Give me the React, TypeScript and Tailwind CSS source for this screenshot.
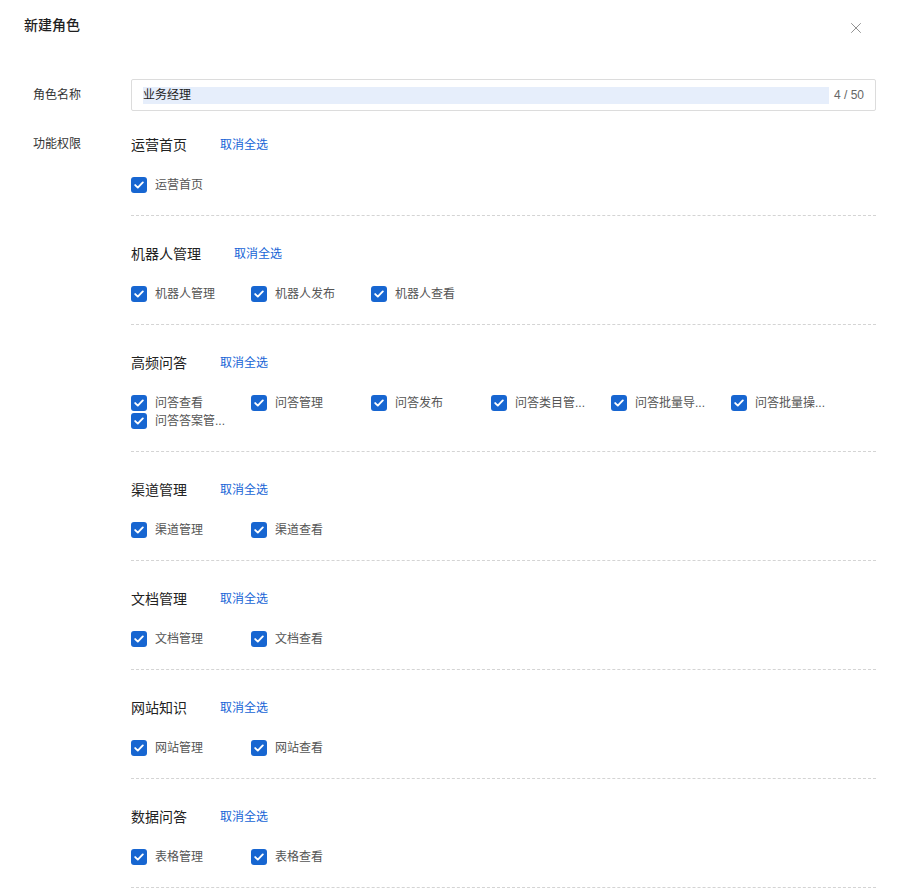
import { X } from "lucide-react";

type Item = { name: string; shown?: string };
type Section = { title: string; items: Item[] };

// 长名称在参考图中被截断显示，完整名称放在 title 里
const sections: Section[] = [
	{ title: "运营首页", items: [{ name: "运营首页" }] },
	{
		title: "机器人管理",
		items: [{ name: "机器人管理" }, { name: "机器人发布" }, { name: "机器人查看" }],
	},
	{
		title: "高频问答",
		items: [
			{ name: "问答查看" },
			{ name: "问答管理" },
			{ name: "问答发布" },
			{ name: "问答类目管理", shown: "问答类目管..." },
			{ name: "问答批量导入", shown: "问答批量导..." },
			{ name: "问答批量操作", shown: "问答批量操..." },
			{ name: "问答答案管理", shown: "问答答案管..." },
		],
	},
	{ title: "渠道管理", items: [{ name: "渠道管理" }, { name: "渠道查看" }] },
	{ title: "文档管理", items: [{ name: "文档管理" }, { name: "文档查看" }] },
	{ title: "网站知识", items: [{ name: "网站管理" }, { name: "网站查看" }] },
	{ title: "数据问答", items: [{ name: "表格管理" }, { name: "表格查看" }] },
];

function Checkbox({ item }: { item: Item }) {
	return (
		<label className="flex items-center h-[18px] w-[120px] cursor-pointer" title={item.name}>
			<span className="w-4 h-4 rounded-[3px] bg-[#1766d1] flex items-center justify-center shrink-0">
				<svg width="10" height="8" viewBox="0 0 10 8" fill="none">
					<path
						d="M1.2 4.1 3.8 6.6 8.8 1.4"
						stroke="white"
						strokeWidth="1.9"
						strokeLinecap="round"
						strokeLinejoin="round"
					/>
				</svg>
			</span>
			<span className="ml-2 whitespace-nowrap text-xs leading-[18px] text-[#555]">
				{item.shown ?? item.name}
			</span>
		</label>
	);
}

export default function App() {
	return (
		<div
			className="w-[900px] h-[889px] overflow-hidden bg-white relative"
			style={{ fontFamily: '"Liberation Sans", "Noto Sans CJK SC", sans-serif' }}
		>
			{/* Header */}
			<div className="flex items-center justify-between pl-6 pr-[35px] pt-[14px] h-[36px]">
				<h2 className="text-sm leading-[22px] font-medium text-[#1f1f1f]">新建角色</h2>
				<button className="text-[#8f8f8f] mt-[6px]">
					<X size={18} strokeWidth={1.3} />
				</button>
			</div>

			<div className="mt-[43px] pr-6">
				{/* 角色名称 */}
				<div className="flex items-center">
					<div className="w-[131px] pl-[33px] text-xs text-[#333]">角色名称</div>
					<div className="flex-1 h-[32px] border border-[#dcdcdc] rounded-[2px] flex items-center pl-[11px] pr-[11px]">
						<div className="flex-1 h-[17px] bg-[#e6eefb] flex items-center text-xs text-[#222]">
							业务经理
						</div>
						<span className="ml-[5px] text-xs text-[#666]">4 / 50</span>
					</div>
				</div>

				{/* 功能权限 */}
				<div className="flex mt-[23px]">
					<div className="w-[131px] pl-[33px] text-xs leading-[18px] pt-[1px] text-[#333] shrink-0">
						功能权限
					</div>
					<div className="flex-1">
						{sections.map((s, i) => (
							<div key={s.title} className={i > 0 ? "mt-[27px]" : ""}>
								<div className="flex items-center h-[22px]">
									<span className="text-sm text-[#222]">{s.title}</span>
									<button className="ml-[33px] text-xs text-[#1664d6]">取消全选</button>
								</div>
								<div className="mt-[20px] flex flex-wrap">
									{s.items.map((it) => (
										<Checkbox key={it.name} item={it} />
									))}
								</div>
								<div className="mt-[21px] border-t border-dashed border-[#d4d4d4]" />
							</div>
						))}
					</div>
				</div>
			</div>
		</div>
	);
}
